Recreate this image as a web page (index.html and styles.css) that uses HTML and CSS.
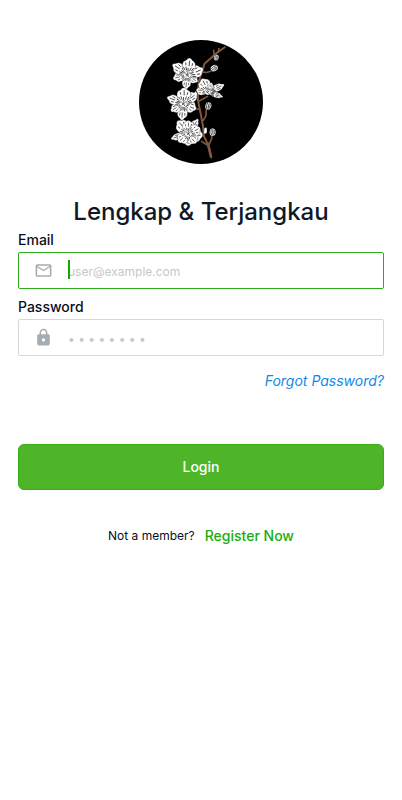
FILE: index.html
```html
<!DOCTYPE html>
<html lang="id">
<head>
<meta charset="utf-8">
<meta name="viewport" content="width=device-width, initial-scale=1">
<title>Login</title>
<link rel="stylesheet" href="styles.css">
</head>
<body>
<main class="page">
  <svg class="logo" viewBox="9 10 374 374" role="img" aria-label="Orchid">
    <defs>
      <g id="petal">
        <path d="M0 0C-14-5-26-17-21-31C-16-37-11-35-8-41C-3-46 5-44 9-39C14-37 21-35 22-27C23-15 11-5 0 0Z" fill="#fff" stroke="#000"/>
        <path d="M0-9L-1-18M1-23L0-37M-5-11L-9-20M-10-24L-12-31M5-11L9-20M10-24L12-32M-10-11L-17-18M11-11L17-20" fill="none" stroke="#000" stroke-width="2"/>
      </g>
      <g id="core">
        <path d="M-10-5L-2-10L8-7L12 2L5 11L-6 10L-12 3Z" fill="#fff" stroke="#000"/>
        <path d="M-6-3L0 0L6-4M-5 5L0 0L4 7M0-7V-3" fill="none" stroke="#000" stroke-width="2"/>
      </g>
      <g id="bud">
        <ellipse rx="9" ry="11" fill="#fff"/>
        <path d="M-4-9Q-7 0-3 9M1-9Q-1 0 2 10M5-7Q4 0 6 6" fill="none" stroke="#000" stroke-width="2"/>
      </g>
    </defs>
    <circle cx="196" cy="197" r="187"/>
    <g fill="none" stroke="#80583e" stroke-width="6" stroke-linecap="round" stroke-linejoin="round">
      <path d="M268 32L246 47L228 63L207 81L200 103L190 133L187 160L187 193L195 232L202 270L205 300L218 328L227 364"/>
      <path d="M236 56L234 41M249 46L250 36M202 107L213 108L225 104M190 194L202 188L216 180M190 219L172 216M203 252L211 239L212 219M219 326L228 309L229 293M214 326L198 316" stroke-width="5"/>
      <path d="M217 323L226 361" stroke-width="8"/>
    </g>
    <use href="#bud" transform="translate(236 95) rotate(60)"/>
    <use href="#bud" transform="translate(242 63) rotate(15) scale(.8)"/>
    <use href="#bud" transform="translate(218 209) rotate(15)"/>
    <use href="#bud" transform="translate(231 288)"/>
    <g transform="translate(155 115)">
      <use href="#petal" transform="rotate(186) scale(.6 1)"/>
      <use href="#petal" transform="rotate(-105) scale(.65 1.02)"/>
      <use href="#petal" transform="rotate(125) scale(.6 .85)"/>
      <use href="#petal" transform="rotate(-54) scale(.75 1.25)"/>
      <use href="#petal" transform="rotate(70) scale(.85 1.15)"/>
      <use href="#petal" transform="rotate(9) scale(.9 1.16)"/>
      <use href="#core"/>
    </g>
    <g transform="translate(143 202)">
      <use href="#petal" transform="rotate(186) scale(.7 1.15)"/>
      <use href="#petal" transform="rotate(-120) scale(.65 1)"/>
      <use href="#petal" transform="rotate(114) scale(.8 .95)"/>
      <use href="#petal" transform="rotate(-68) scale(.65 1.2)"/>
      <use href="#petal" transform="rotate(52) scale(.7 1.2)"/>
      <use href="#petal" transform="rotate(3) scale(.95 1.1)"/>
      <use href="#core"/>
    </g>
    <g transform="translate(158 292)">
      <use href="#petal" transform="rotate(-107) scale(.5 1.25)"/>
      <use href="#petal" transform="rotate(99) scale(1 1)"/>
      <use href="#petal" transform="rotate(181) scale(.85 .85)"/>
      <use href="#petal" transform="rotate(143) scale(.8 .85)"/>
      <use href="#petal" transform="rotate(-130) scale(.8 .9)"/>
      <use href="#petal" transform="rotate(-40) scale(.9 1.15)"/>
      <use href="#petal" transform="rotate(34) scale(.5 1.2)"/>
      <use href="#petal" transform="rotate(0) scale(.8 .9)"/>
      <use href="#petal" transform="rotate(65) scale(.8 .9)"/>
      <use href="#core"/>
    </g>
    <g transform="translate(216 167)">
      <use href="#petal" transform="rotate(-78) scale(.6 .8)"/>
      <use href="#petal" transform="rotate(108) scale(.4 1.1)"/>
      <use href="#petal" transform="rotate(66) scale(.5 1.25)"/>
      <use href="#petal" transform="rotate(-22) scale(.85 1)"/>
      <use href="#petal" transform="rotate(25) scale(.4 .7)"/>
      <use href="#core" transform="scale(.8)"/>
    </g>
    <path d="M176 181Q183 169 181 162Q175 172 176 181M206 277Q216 266 213 291L205 292Z" fill="#fff"/>
  </svg>

  <h1 class="title">Lengkap &amp; Terjangkau</h1>

  <form class="form">
    <label class="label" for="email">Email</label>
    <div class="field field-active">
      <svg class="icon" viewBox="0 0 24 24" aria-hidden="true"><path d="M22 6c0-1.100-.9-2-2-2H4c-1.100 0-2 .9-2 2v12c0 1.100.9 2 2 2h16c1.100 0 2-.9 2-2V6zm-2 0l-8 5-8-5h16zm0 12H4V8l8 5 8-5v10z"/></svg>
      <div class="entry">
        <input class="input" id="email" type="email" placeholder="user@example.com">
        <span class="caret"></span>
      </div>
    </div>
    <label class="label" for="password">Password</label>
    <div class="field">
      <svg class="icon" viewBox="0 0 24 24" aria-hidden="true"><path d="M18 8h-1V6c0-2.760-2.240-5-5-5S7 3.240 7 6v2H6c-1.100 0-2 .9-2 2v10c0 1.100.9 2 2 2h12c1.100 0 2-.9 2-2V10c0-1.100-.9-2-2-2zm-6 9c-1.100 0-2-.9-2-2s.9-2 2-2 2 .9 2 2-.9 2-2 2zm3.100-9H8.900V6c0-1.710 1.390-3.100 3.100-3.100s3.100 1.390 3.100 3.100v2z"/></svg>
      <div class="entry">
        <input class="input" id="password" type="password" placeholder="• • • • • • • •">
      </div>
    </div>
    <a class="forgot" href="#forgot">Forgot Password?</a>
    <button class="login" type="submit">Login</button>
  </form>

  <p class="signup">Not a member? <a class="register" href="#register">Register Now</a></p>
</main>
</body>
</html>
```
FILE: styles.css
```css
* {
  box-sizing: border-box;
}

body {
  margin: 0;
  background: #fff;
  color: #090f1a;
  font-family: Inter, "Liberation Sans", sans-serif;
}

.page {
  display: flex;
  flex-direction: column;
  padding: 40px 18px;
}

.logo {
  width: 124px;
  height: 124px;
  align-self: center;
}

.title {
  margin: 32px 0 4px;
  color: #101828;
  font-size: 24px;
  font-weight: 500;
  line-height: 32px;
  text-align: center;
}

.form {
  display: flex;
  flex-direction: column;
}

.label {
  font-size: 14px;
  font-weight: 500;
  line-height: 16px;
  margin-bottom: 4px;
}

.field {
  display: flex;
  align-items: center;
  gap: 15px;
  height: 37px;
  margin-bottom: 10px;
  padding: 0 15px 1px;
  border: 1px solid #d6d6d6;
  border-radius: 2px;
}

.field-active {
  border-color: #2bae17;
}

.icon {
  width: 19px;
  height: 19px;
  flex: none;
  fill: #a5adb2;
}

.entry {
  position: relative;
  flex: 1;
}

.input {
  display: block;
  width: 100%;
  padding: 4px 0 0;
  border: 0;
  outline: 0;
  background: none;
  color: #101828;
  font: 12px/18px Inter, "Liberation Sans", sans-serif;
}

.input::placeholder {
  color: #c8c8c8;
  opacity: 1;
}

.caret {
  position: absolute;
  top: 1px;
  left: 0;
  width: 2px;
  height: 19px;
  background: #16a800;
}

.forgot {
  align-self: flex-end;
  margin-top: 6px;
  color: #1488ea;
  font-size: 14px;
  font-style: italic;
  line-height: 18px;
  text-decoration: none;
}

.login {
  height: 46px;
  margin-top: 54px;
  border: 1px solid #35ae18;
  border-radius: 6px;
  background: #4fb528;
  color: #fff;
  font: 500 14px/18px Inter, "Liberation Sans", sans-serif;
}

.signup {
  display: flex;
  justify-content: center;
  align-items: center;
  gap: 10px;
  margin: 36px 0 0;
  font-size: 12px;
  line-height: 20px;
}

.register {
  color: #20ad0b;
  font-size: 14px;
  font-weight: 500;
  text-decoration: none;
}
```
